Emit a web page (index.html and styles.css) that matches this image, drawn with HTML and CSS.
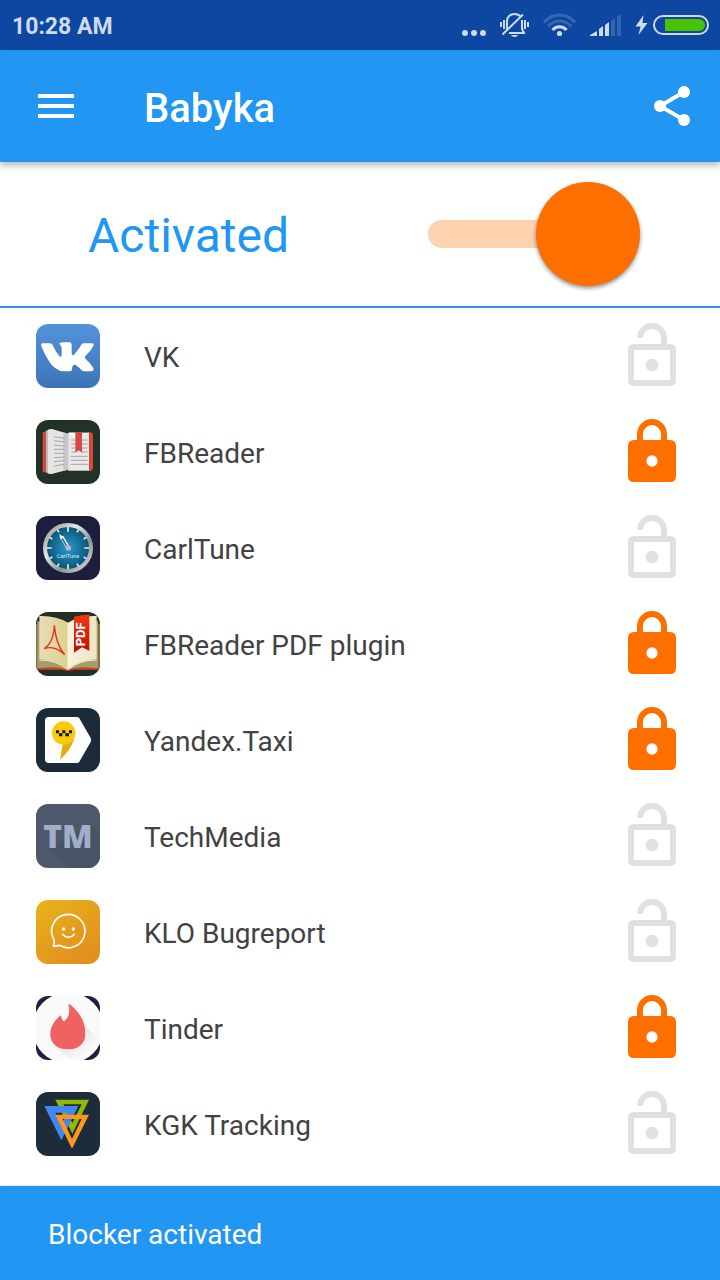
FILE: index.html
```html
<!DOCTYPE html>
<html lang="en">
<head>
<meta charset="utf-8">
<meta name="viewport" content="width=device-width, initial-scale=1">
<title>Babyka</title>
<link rel="stylesheet" href="styles.css">
</head>
<body>
<svg class="defs" aria-hidden="true">
  <symbol id="open" viewBox="0 0 24 24">
    <path d="M8 6a4 4 0 0 1 8 0v3" fill="none" stroke="currentColor" stroke-width="2"/>
    <path fill="currentColor" fill-rule="evenodd" d="M6 8h12q2 0 2 2v10q0 2-2 2H6q-2 0-2-2V10q0-2 2-2zM6 10v10h12V10z"/>
    <circle cx="12" cy="15" r="2.1" fill="currentColor"/>
  </symbol>
  <symbol id="closed" viewBox="0 0 24 24">
    <path d="M8 9V6a4 4 0 0 1 8 0v3" fill="none" stroke="currentColor" stroke-width="2"/>
    <path fill="currentColor" d="M6 8h12q2 0 2 2v10q0 2-2 2H6q-2 0-2-2V10q0-2 2-2z"/>
    <circle cx="12" cy="15" r="1.9" fill="#fff"/>
  </symbol>
</svg>
<div class="app">
  <div class="status">
    <time class="clock">10:28 AM</time>
    <div class="indicators">
      <svg width="26" height="28" viewBox="461 11 26 28"><g fill="currentColor"><circle cx="465" cy="33" r="3"/><circle cx="474" cy="33" r="3"/><circle cx="483" cy="33" r="3"/></g></svg>
      <svg width="30" height="28" viewBox="500 11 30 28"><g fill="none" stroke="currentColor" stroke-width="2"><path d="M501 22v5M504 20v9M525 20v9M528 22v5"/><path d="M507 30v-9c0-4 3-7 7.500-7 3 0 5 1 6.500 3M522 20v9l2 4H509M502.500 34.500l20.500-20"/></g><path d="M511 35h7c-1 2.500-6 2.500-7 0z" fill="currentColor"/></svg>
      <svg width="34" height="28" viewBox="543 11 34 28"><g fill="none" stroke="currentColor" stroke-width="3"><path d="M544 22.500c8-10 23-10 31 0M548 26.500c6-7.500 17-7.500 23 0" opacity=".22"/><path d="M552.500 30c3.500-4.500 10.500-4.500 14 0"/></g><circle cx="559.500" cy="33.500" r="2.600" fill="currentColor"/></svg>
      <svg width="32" height="28" viewBox="590 11 32 28"><g fill="currentColor"><path d="M590 36v-1l7-4v5zM599 36v-7l4-3v10zM605 36V25l4-3v14z"/><path d="M611 36V21l4-3v18zM617 36V17l4-3v22z" opacity=".2"/></g></svg>
      <svg width="75" height="28" viewBox="635 11 75 28"><path d="M643.500 15l-8 11.500h5L638.500 35l9-12h-5z" fill="currentColor"/><rect x="654" y="16" width="54" height="18" rx="9" fill="none" stroke="currentColor" stroke-width="2"/><path d="M665 19h34a6 6 0 0 1 0 12h-34z" fill="#4ac400"/></svg>
    </div>
  </div>
  <header class="bar">
    <button class="icon-button" aria-label="Menu"><svg width="48" height="48" viewBox="0 0 24 24"><path d="M3 7h18M3 12h18M3 17h18" fill="none" stroke="#fff" stroke-width="2"/></svg></button>
    <h1 class="title">Babyka</h1>
    <button class="icon-button" aria-label="Share"><svg width="48" height="48" viewBox="0 0 24 24"><path d="M18 5L6 12l12 7" fill="none" stroke="#fff" stroke-width="1.900"/><g fill="#fff"><circle cx="18" cy="5" r="3"/><circle cx="6" cy="12" r="3"/><circle cx="18" cy="19" r="3"/></g></svg></button>
  </header>
  <main class="main">
    <div class="master">
      <label class="master-label" for="active">Activated</label>
      <input class="switch" id="active" type="checkbox" role="switch" checked>
    </div>
    <ul class="list">
      <li class="row">
        <svg class="app-icon" viewBox="0 0 192 192"><defs><linearGradient id="vk" x2="0" y2="1"><stop stop-color="#5393da"/><stop offset="1" stop-color="#3d74b8"/></linearGradient></defs><path fill="url(#vk)" d="M0 0h192v192H0z"/><path fill="#fff" d="M20 58H42Q48 58 50 64Q60 86 72 98Q77 100 77 92V72Q76 64 70 60Q70 55 80 55H100Q107 55 107 64V88Q108 98 116 90Q128 76 136 62Q138 58 144 58H168Q175 58 172 66Q164 82 148 96Q144 101 150 106Q164 118 172 132Q175 141 166 142H146Q140 142 136 138Q124 124 116 122Q108 122 108 136Q108 142 102 142H84Q56 140 38 110Q24 88 16 66Q14 58 20 58Z"/></svg>
        <span class="name">VK</span>
        <button class="lock" aria-label="Lock VK"><svg width="72" height="72"><use href="#open"/></svg></button>
      </li>
      <li class="row">
        <svg class="app-icon" viewBox="0 0 192 192"><path fill="#223226" d="M0 0h192v192H0z"/><path fill="#d9463b" d="M20 38l12-6v126l-12-2zM156 37h8q7 2 7 9v98q0 8-7 9h-8z"/><path fill="#ddd" d="M96 38h63v114H96z"/><path fill="#e9e9e9" d="M100 38h59v112h-59z"/><path fill="#bcbcbc" d="M30 32l14-5 8 2v132l-14 1-8-6z"/><path fill="#e4e4e4" d="M36 29l12-2 48 14v108l-50 13-10-4z"/><path fill="#c8c8c8" d="M82 37l14 5v107l-14 3z"/><path fill="none" stroke="#999" stroke-width="2.500" d="M54 50l32 5M54 62l32 4M54 75l32 3M54 88h32M54 100h32M54 113l32-2M54 125l32-3M54 138l32-5M106 60h12M138 60h17M106 72h12M138 72h17M106 84h12M138 84h17M106 96h12M138 96h17M104 109h51M104 121h51M104 133h51"/><path fill="#fff" d="M98 38h20v20z"/><path fill="#d94840" d="M118 37h20v61l-10-7-10 7z"/></svg>
        <span class="name">FBReader</span>
        <button class="lock lock-on" aria-label="Unlock FBReader"><svg width="72" height="72"><use href="#closed"/></svg></button>
      </li>
      <li class="row">
        <svg class="app-icon" viewBox="0 0 192 192"><defs><radialGradient id="dial"><stop stop-color="#2999ce"/><stop offset="1" stop-color="#07506f"/></radialGradient><linearGradient id="rim" x2="1" y2="1"><stop stop-color="#8b8b8b"/><stop offset=".35" stop-color="#e5e5e5"/><stop offset=".65" stop-color="#929292"/><stop offset="1" stop-color="#ddd"/></linearGradient></defs><path fill="#1b1f3c" d="M0 0h192v192H0z"/><circle cx="96" cy="96" r="69" fill="url(#dial)" stroke="url(#rim)" stroke-width="12"/><path stroke="#e9f1f3" stroke-width="5" d="M96 33v14M96 145v14M33 96h14M145 96h14M64 41l5 8M128 41l-5 8M41 64l8 5M151 64l-8 5M41 128l8-5M151 128l-8-5M64 151l5-8M128 151l-5-8"/><path d="M98 98L77 62" stroke="#e5eaec" stroke-width="11"/><path d="M92 90L78 66" stroke="#254e66" stroke-width="4"/><path d="M70 54l13 10-10 6z" fill="#fff"/><circle cx="97" cy="96" r="8" fill="#b6b9bb"/><text x="96" y="126" text-anchor="middle" class="dial-text">CarlTune</text></svg>
        <span class="name">CarlTune</span>
        <button class="lock" aria-label="Lock CarlTune"><svg width="72" height="72"><use href="#open"/></svg></button>
      </li>
      <li class="row">
        <svg class="app-icon" viewBox="0 0 192 192"><defs><linearGradient id="page"><stop stop-color="#e8dcb9"/><stop offset=".48" stop-color="#ded08f"/><stop offset=".5" stop-color="#f8f3df"/><stop offset="1" stop-color="#eee5bf"/></linearGradient><linearGradient id="tag" x2="0" y2="1"><stop stop-color="#f13a12"/><stop offset="1" stop-color="#bd0b06"/></linearGradient></defs><path fill="#203027" d="M0 0h192v192H0z"/><path fill="#7d754b" d="M0 36l10-4v126h172V32l10 4v136H0z"/><path fill="#a79c68" d="M4 26l88 44 94-44v144q-50-12-90 5-44-17-92-5z"/><path fill="url(#page)" d="M10 12q50-2 86 20 36-22 86-20v130q-50 0-86 30-36-30-86-30z"/><path d="M10 144q54 0 86 30 32-30 86-30" fill="none" stroke="#f3eac9" stroke-width="3"/><path d="M0 171h78q18 8 36 0h78" fill="none" stroke="#e63219" stroke-width="4"/><path d="M55 40c3 34 12 66 31 88-18-18-40-26-62-18 20-12 30-40 31-70z" fill="none" stroke="#e52e20" stroke-width="4"/><path fill="url(#tag)" d="M114 14q22-6 46-6v108l-22-10-24 16z"/><text class="tag-text" transform="translate(148 103) rotate(-90)">PDF</text></svg>
        <span class="name">FBReader PDF plugin</span>
        <button class="lock lock-on" aria-label="Unlock FBReader PDF plugin"><svg width="72" height="72"><use href="#closed"/></svg></button>
      </li>
      <li class="row">
        <svg class="app-icon" viewBox="0 0 192 192"><path fill="#1c2b3a" d="M0 0h192v192H0z"/><path fill="#fff" d="M38 27h86q4 0 6 4l34 59q3 6 0 12l-34 59q-2 4-6 4H38q-11 0-11-11V38q0-11 11-11z"/><path fill="#e0ae11" d="M80 109l-8 46q31-25 43-64z"/><circle cx="83" cy="75" r="35" fill="#fcc90a"/><path fill="#16150c" d="M60 67h9v9h-9zM79 67h9v9h-9zM99 67h9v9h-9zM69 76h10v9H69zM88 76h11v9H88z"/></svg>
        <span class="name">Yandex.Taxi</span>
        <button class="lock lock-on" aria-label="Unlock Yandex.Taxi"><svg width="72" height="72"><use href="#closed"/></svg></button>
      </li>
      <li class="row">
        <svg class="app-icon" viewBox="0 0 192 192"><path fill="#4d586b" d="M0 0h192v192H0z"/><path fill="#485366" d="M38 131l61 61h93V88l-24-24z"/><text class="tm-text" x="96" y="131" text-anchor="middle">TM</text></svg>
        <span class="name">TechMedia</span>
        <button class="lock" aria-label="Lock TechMedia"><svg width="72" height="72"><use href="#open"/></svg></button>
      </li>
      <li class="row">
        <svg class="app-icon" viewBox="0 0 192 192"><defs><linearGradient id="amber" x2=".7" y2="1"><stop stop-color="#e7b41a"/><stop offset="1" stop-color="#e48e1f"/></linearGradient></defs><path fill="url(#amber)" d="M0 0h192v192H0z"/><g fill="none" stroke="#fff" stroke-width="5" stroke-linejoin="round" stroke-linecap="round"><path d="M54 119a50 50 0 1 1 17 17q-9 2-19 3 4-9 2-20z"/><path d="M80 103q17 18 35 0"/></g><circle cx="83" cy="87" r="5" fill="#fff"/><circle cx="112" cy="87" r="5" fill="#fff"/></svg>
        <span class="name">KLO Bugreport</span>
        <button class="lock" aria-label="Lock KLO Bugreport"><svg width="72" height="72"><use href="#open"/></svg></button>
      </li>
      <li class="row">
        <svg class="app-icon" viewBox="0 0 192 192"><defs><linearGradient id="cast" x1=".3" y1=".3" x2=".8" y2=".8"><stop stop-color="#e2e2e2"/><stop offset="1" stop-color="#fafafa"/></linearGradient></defs><path fill="#241d3b" d="M0 0h192v192H0z"/><circle cx="96" cy="96" r="107" fill="#fafafa"/><path fill="url(#cast)" d="M140 82l44 44-24 50-26 14H98l-42-42z"/><path fill="#f06262" d="M97 24q5 0 14 9c20 19 37 43 37 80 0 31-22 47-53 47s-52-17-52-45c0-24 14-44 32-57 2 8 3 14 8 18 16-9 20-28 14-52z"/></svg>
        <span class="name">Tinder</span>
        <button class="lock lock-on" aria-label="Unlock Tinder"><svg width="72" height="72"><use href="#closed"/></svg></button>
      </li>
      <li class="row">
        <svg class="app-icon" viewBox="0 0 192 192"><path fill="#1d2c3b" d="M0 0h192v192H0z"/><g fill-rule="evenodd"><path fill="#91b900" d="M58 23h101l-50 102zM82 37l27 56 28-56z"/><path fill="#4286f5" d="M25 42h102l-51 103zM58 62l18 36 19-36z"/><path fill="#ff9421" d="M58 68h101l-51 102zM80 81l28 60 29-60z"/></g></svg>
        <span class="name">KGK Tracking</span>
        <button class="lock" aria-label="Lock KGK Tracking"><svg width="72" height="72"><use href="#open"/></svg></button>
      </li>
    </ul>
  </main>
  <footer class="snackbar" role="status">Blocker activated</footer>
</div>
</body>
</html>
```
FILE: styles.css
```css
* { box-sizing: border-box; }
body { margin: 0; background: #fff; color: #424242; font-family: Roboto, "Noto Sans", sans-serif; }
button { padding: 0; border: 0; background: none; color: inherit; cursor: pointer; }
svg { display: block; }
.defs { display: none; }
.app { display: flex; flex-direction: column; min-height: 100vh; }
.status { display: flex; align-items: center; justify-content: space-between; height: 50px; padding: 0 10px 0 12px; background: #0d47a1; color: #cfdaec; }
.clock { font-size: 23px; font-weight: 700; line-height: 28px; padding-top: 4px; }
.indicators { display: flex; gap: 13px; }
.bar { display: flex; align-items: center; height: 112px; padding: 0 24px 0 32px; background: #2196f3; color: #fff; box-shadow: 0 4px 6px rgba(0, 0, 0, .25); }
.title { flex: 1; margin: 0; padding: 6px 0 0 64px; font-size: 40px; font-weight: 500; line-height: 48px; }
.main { flex: 1; }
.master { display: flex; align-items: center; justify-content: space-between; height: 146px; padding: 0 80px 0 88px; border-bottom: 2px solid #2196f3; }
.master-label { color: #2196f3; font-size: 48px; line-height: 56px; padding-top: 4px; }
.switch { appearance: none; display: flex; align-items: center; width: 212px; height: 104px; margin: 0; cursor: pointer; }
.switch::before { content: ""; flex: 1; height: 28px; margin-right: -52px; border-radius: 14px; background: #ffd2b0; }
.switch::after { content: ""; width: 104px; height: 104px; border-radius: 50%; background: #ff6f00; box-shadow: 0 2px 4px rgba(0, 0, 0, .45); }
.list { margin: 0; padding: 0; list-style: none; }
.row { display: flex; align-items: center; height: 96px; padding: 0 32px 0 36px; }
.app-icon { width: 64px; height: 64px; border-radius: 12px; }
.name { flex: 1; padding: 4px 0 0 44px; font-size: 28px; line-height: 36px; }
.lock { color: #e0e0e0; }
.lock-on { color: #ff6f00; }
.dial-text { fill: #d5edf5; font: 17px Roboto, sans-serif; }
.tag-text { fill: #fff; font: 700 39px Roboto, sans-serif; }
.tm-text { fill: #a1aeca; font: 800 95px "Open Sans", sans-serif; }
.snackbar { height: 94px; padding: 31px 48px 0; background: #2196f3; color: #fff; font-size: 28px; line-height: 36px; box-shadow: 0 0 2px rgba(0, 0, 0, .25); }
```
